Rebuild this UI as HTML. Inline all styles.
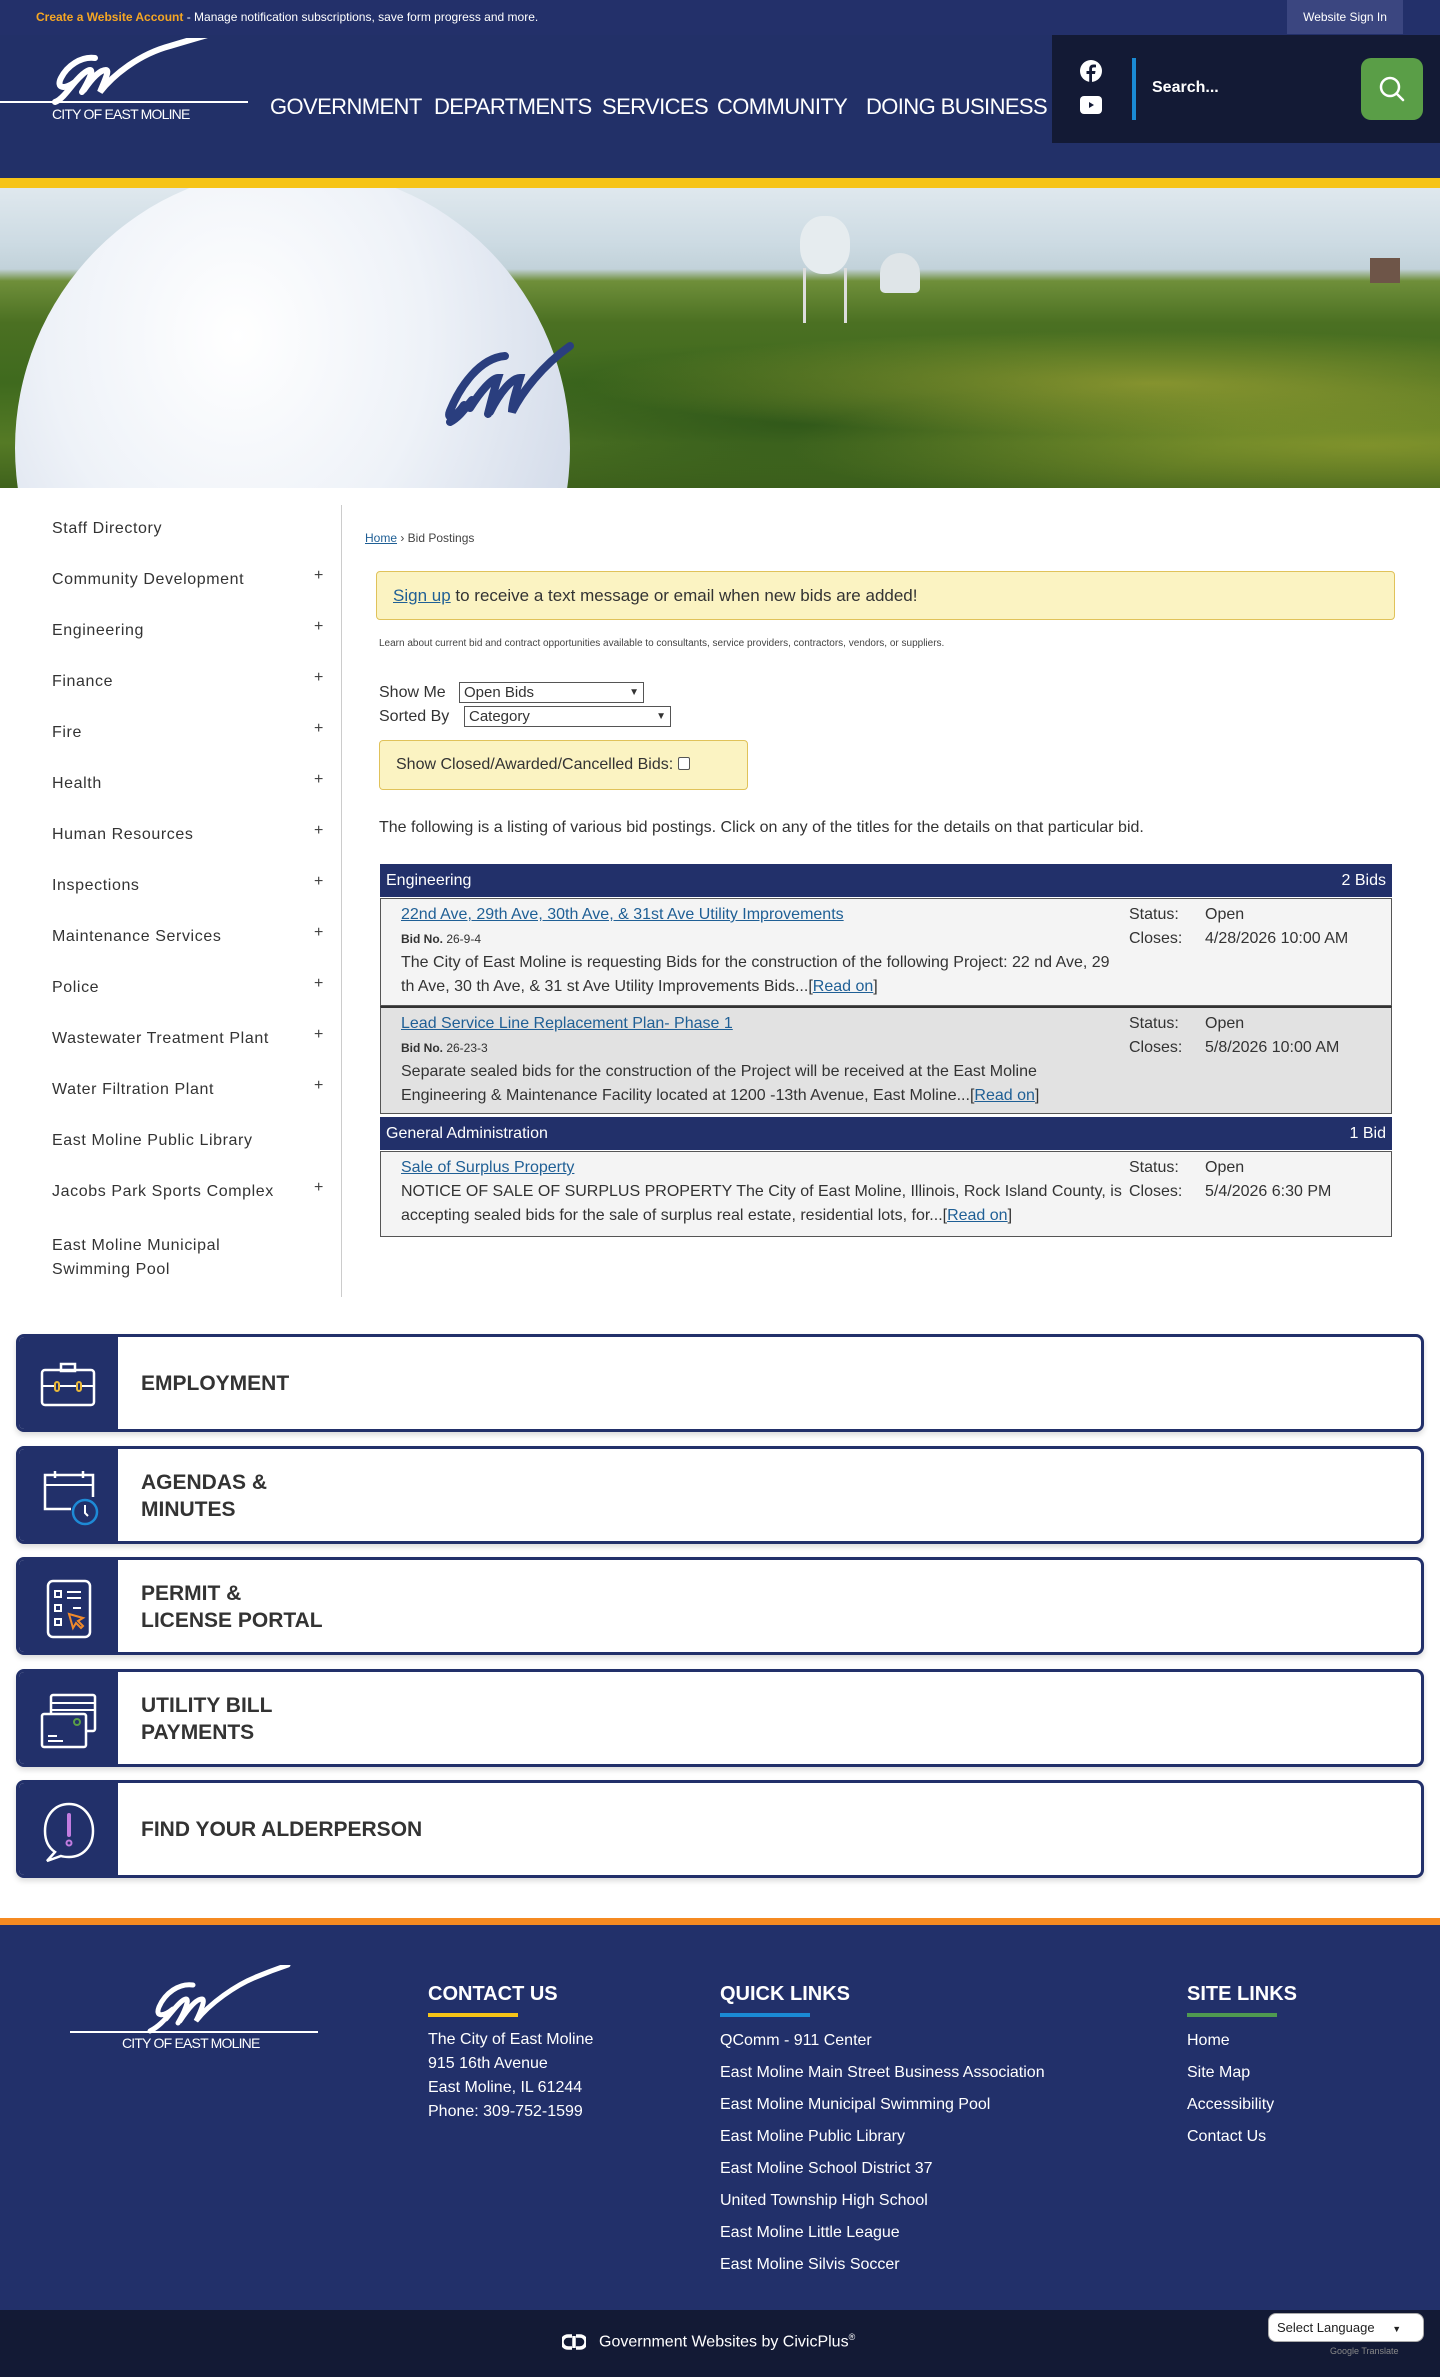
<!DOCTYPE html>
<html><head><meta charset="utf-8">
<style>
*{box-sizing:border-box;margin:0;padding:0}
body{width:1440px;height:2377px;font-family:"Liberation Sans",sans-serif;background:#fff;position:relative;overflow:hidden;color:#333}
.abs{position:absolute}
a{color:#1f5f95}
.top{left:0;top:0;width:1440px;height:35px;background:#23306a}
.hdr{left:0;top:35px;width:1440px;height:143px;background:#223068}
.nav{top:94px;color:#fff;font-size:22px;letter-spacing:-0.6px}
.side{left:52px;font-size:16px;color:#333;letter-spacing:0.6px}
.plus{left:314px;font-size:16px;color:#444}
.tblh{left:380px;width:1012px;height:33px;background:#22306a;color:#fff;font-size:16px;line-height:33px;padding:0 6px}
.row{left:380px;width:1012px;border:1px solid #555;font-size:16px;line-height:24px;color:#333}
.row .l{position:absolute;left:20px;top:4px;width:725px}
.row .r{position:absolute;left:748px;top:4px}
.row .r span{display:inline-block;width:76px}
.bn{font-size:12px}
.card{left:16px;width:1408px;height:98px;border:3px solid #22306a;border-radius:8px;background:#fff;overflow:hidden;box-shadow:0 3px 6px rgba(0,0,0,.15)}
.card .ic{position:absolute;left:0;top:0;width:99px;height:100%;background:#22306a}
.card .t{position:absolute;left:122px;font-size:21px;font-weight:bold;color:#333;line-height:27px}
.fh{top:1983px;color:#fff;font-size:20px;font-weight:bold}
.fl{color:#fff;font-size:16px}
</style></head><body>
<div class="abs top"></div>
<div class="abs" style="left:36px;top:10px;font-size:12px;color:#fff"><b style="color:#f5a623">Create a Website Account</b> - Manage notification subscriptions, save form progress and more.</div>
<div class="abs" style="left:1287px;top:0;width:116px;height:34px;background:#3b4680;color:#fff;font-size:12px;line-height:34px;text-align:center">Website Sign In</div>
<div class="abs hdr"></div>
<svg class="abs" style="left:0;top:38px" width="252" height="90" viewBox="0 0 252 90">
<path d="M95 20c-14-2-28 8-34 20-5 10 3 12 14 4M75 44c-8 10-14 18-20 20M70 50c8-10 16-18 20-18 4 0-2 12-8 22M84 52c8-12 16-20 22-20 4 0-2 12-6 22 14-18 40-38 70-46 20-6 40-12 70-20" fill="none" stroke="#fff" stroke-width="6" stroke-linecap="round"/>
<line x1="0" y1="64" x2="248" y2="64" stroke="#fff" stroke-width="2"/>
<text x="52" y="81" fill="#fff" font-size="14" font-family="Liberation Sans" letter-spacing="-0.8">CITY OF EAST MOLINE</text>
</svg>
<div class="abs nav" style="left:270px">GOVERNMENT</div>
<div class="abs nav" style="left:434px">DEPARTMENTS</div>
<div class="abs nav" style="left:602px">SERVICES</div>
<div class="abs nav" style="left:717px">COMMUNITY</div>
<div class="abs nav" style="left:866px">DOING BUSINESS</div>
<div class="abs" style="left:1052px;top:35px;width:388px;height:108px;background:#131a35"></div>
<svg class="abs" style="left:1080px;top:60px" width="22" height="22" viewBox="0 0 22 22"><circle cx="11" cy="11" r="11" fill="#fff"/><path d="M12 22v-8h3l.5-3H12V9c0-1 .4-1.6 1.7-1.6H16V4.7c-.5-.1-1.5-.2-2.5-.2-2.6 0-4.3 1.6-4.3 4.4V11H6.5v3h2.7v8z" fill="#131a35"/></svg>
<svg class="abs" style="left:1080px;top:96px" width="22" height="18" viewBox="0 0 22 18"><rect width="22" height="18" rx="4" fill="#fff"/><path d="M9 6l5 3-5 3z" fill="#131a35"/></svg>
<div class="abs" style="left:1132px;top:58px;width:4px;height:62px;background:#1a8ad4"></div>
<div class="abs" style="left:1152px;top:79px;color:#fff;font-size:16px;font-weight:bold">Search...</div>
<div class="abs" style="left:1361px;top:58px;width:62px;height:62px;background:#5a9e47;border-radius:10px"></div>
<svg class="abs" style="left:1377px;top:74px" width="30" height="30" viewBox="0 0 30 30"><circle cx="13" cy="13" r="9" fill="none" stroke="#fff" stroke-width="2.5"/><line x1="19.5" y1="19.5" x2="26" y2="26" stroke="#fff" stroke-width="2.5" stroke-linecap="round"/></svg>
<div class="abs" style="left:0;top:178px;width:1440px;height:10px;background:#f6c417"></div>
<div class="abs" style="left:0;top:188px;width:1440px;height:300px;overflow:hidden;background:linear-gradient(#dfe8ee 0%,#cddbe3 18%,#c2d2da 27%,#6f8f3a 31%,#4b7022 45%,#3f6a1e 65%,#557a25 85%,#3f621c 100%)">
 <div class="abs" style="left:0;top:90px;width:1440px;height:210px;background:radial-gradient(ellipse at 80% 50%,rgba(190,180,60,.55),transparent 35%),radial-gradient(ellipse at 95% 80%,rgba(170,170,50,.5),transparent 30%),radial-gradient(ellipse at 55% 70%,rgba(30,70,20,.6),transparent 40%)"></div>
 <div class="abs" style="left:15px;top:-20px;width:555px;height:560px;border-radius:50%/50%;background:radial-gradient(ellipse at 40% 30%,#fff 0%,#eef2f8 40%,#cdd6e6 85%,#a9b5cc 100%)"></div>
 <svg class="abs" style="left:380px;top:150px" width="200" height="110"><path d="M125 18c-25 2-45 30-55 55-4 10 6 6 14-6M92 62c-8 10-14 18-22 22M90 70c10-16 22-30 28-30-4 12-8 28-10 36M110 74c10-20 22-34 30-34-4 14-8 26-8 34 10-20 30-46 58-66" fill="none" stroke="#2a3e7e" stroke-width="8" stroke-linecap="round"/></svg>
 <div class="abs" style="left:800px;top:28px;width:50px;height:58px;border-radius:45%;background:#e6ecef"></div>
 <div class="abs" style="left:803px;top:80px;width:44px;height:55px;border-left:3px solid #ddd;border-right:3px solid #ddd"></div>
 <div class="abs" style="left:880px;top:65px;width:40px;height:40px;border-radius:50% 50% 5px 5px;background:#dfe5e8"></div>
 <div class="abs" style="left:1370px;top:70px;width:30px;height:25px;background:#6e5548"></div>
</div>
<div class="abs side" style="top:520px">Staff Directory</div>
<div class="abs side" style="top:571px">Community Development</div>
<div class="abs side" style="top:622px">Engineering</div>
<div class="abs side" style="top:673px">Finance</div>
<div class="abs side" style="top:724px">Fire</div>
<div class="abs side" style="top:775px">Health</div>
<div class="abs side" style="top:826px">Human Resources</div>
<div class="abs side" style="top:877px">Inspections</div>
<div class="abs side" style="top:928px">Maintenance Services</div>
<div class="abs side" style="top:979px">Police</div>
<div class="abs side" style="top:1030px">Wastewater Treatment Plant</div>
<div class="abs side" style="top:1081px">Water Filtration Plant</div>
<div class="abs side" style="top:1132px">East Moline Public Library</div>
<div class="abs side" style="top:1183px">Jacobs Park Sports Complex</div>
<div class="abs side" style="top:1234px;line-height:24px">East Moline Municipal<br>Swimming Pool</div>
<div class="abs plus" style="top:567px">+</div><div class="abs plus" style="top:618px">+</div><div class="abs plus" style="top:669px">+</div><div class="abs plus" style="top:720px">+</div><div class="abs plus" style="top:771px">+</div><div class="abs plus" style="top:822px">+</div><div class="abs plus" style="top:873px">+</div><div class="abs plus" style="top:924px">+</div><div class="abs plus" style="top:975px">+</div><div class="abs plus" style="top:1026px">+</div><div class="abs plus" style="top:1077px">+</div><div class="abs plus" style="top:1179px">+</div>
<div class="abs" style="left:341px;top:505px;width:1px;height:792px;background:#ccc"></div>
<div class="abs" style="left:365px;top:531px;font-size:12px;color:#444"><a href="#">Home</a> › Bid Postings</div>
<div class="abs" style="left:376px;top:571px;width:1019px;height:49px;background:#fbf3c2;border:1px solid #e0c25a;border-radius:4px;font-size:17px;line-height:47px;padding-left:16px"><a href="#">Sign up</a> to receive a text message or email when new bids are added!</div>
<div class="abs" style="left:379px;top:638px;font-size:10px;color:#444">Learn about current bid and contract opportunities available to consultants, service providers, contractors, vendors, or suppliers.</div>
<div class="abs" style="left:379px;top:684px;font-size:16px">Show Me</div>
<div class="abs" style="left:459px;top:682px;width:185px;height:21px;border:1px solid #555;font-size:15px;padding-left:4px;line-height:19px">Open Bids<span style="position:absolute;right:4px;font-size:10px">▼</span></div>
<div class="abs" style="left:379px;top:708px;font-size:16px">Sorted By</div>
<div class="abs" style="left:464px;top:706px;width:207px;height:21px;border:1px solid #555;font-size:15px;padding-left:4px;line-height:19px">Category<span style="position:absolute;right:4px;font-size:10px">▼</span></div>
<div class="abs" style="left:379px;top:740px;width:369px;height:50px;background:#fbf3c2;border:1px solid #e0c25a;border-radius:4px;font-size:16px;line-height:48px;padding-left:16px">Show Closed/Awarded/Cancelled Bids: <span style="display:inline-block;width:12px;height:13px;border:1px solid #555;border-radius:2px;vertical-align:-1px;background:#fff"></span></div>
<div class="abs" style="left:379px;top:819px;font-size:16px">The following is a listing of various bid postings. Click on any of the titles for the details on that particular bid.</div>
<div class="abs tblh" style="top:864px">Engineering<span style="float:right">2 Bids</span></div>
<div class="abs row" style="top:898px;height:108px;background:#f4f4f4"><div class="l"><a href="#">22nd Ave, 29th Ave, 30th Ave, &amp; 31st Ave Utility Improvements</a><br><span class="bn"><b>Bid No.</b> 26-9-4</span><br>The City of East Moline is requesting Bids for the construction of the following Project: 22 nd Ave, 29 th Ave, 30 th Ave, &amp; 31 st Ave Utility Improvements Bids...[<a href="#">Read on</a>]</div><div class="r"><span>Status:</span>Open<br><span>Closes:</span>4/28/2026 10:00 AM</div></div>
<div class="abs row" style="top:1006px;height:108px;background:#e2e2e2;border-top:2px solid #333"><div class="l"><a href="#">Lead Service Line Replacement Plan- Phase 1</a><br><span class="bn"><b>Bid No.</b> 26-23-3</span><br>Separate sealed bids for the construction of the Project will be received at the East Moline Engineering &amp; Maintenance Facility located at 1200 -13th Avenue, East Moline...[<a href="#">Read on</a>]</div><div class="r"><span>Status:</span>Open<br><span>Closes:</span>5/8/2026 10:00 AM</div></div>
<div class="abs tblh" style="top:1117px">General Administration<span style="float:right">1 Bid</span></div>
<div class="abs row" style="top:1151px;height:86px;background:#f4f4f4"><div class="l"><a href="#">Sale of Surplus Property</a><br>NOTICE OF SALE OF SURPLUS PROPERTY The City of East Moline, Illinois, Rock Island County, is accepting sealed bids for the sale of surplus real estate, residential lots, for...[<a href="#">Read on</a>]</div><div class="r"><span>Status:</span>Open<br><span>Closes:</span>5/4/2026 6:30 PM</div></div>
<div class="abs card" style="top:1334px"><div class="ic"><svg style="position:absolute;left:20px;top:25px" width="58" height="46" viewBox="0 0 58 46"><rect x="3" y="8" width="52" height="35" rx="3" fill="none" stroke="#fff" stroke-width="2.5"/><rect x="22" y="2" width="14" height="7" fill="none" stroke="#fff" stroke-width="2.5"/><line x1="3" y1="24" x2="55" y2="24" stroke="#fff" stroke-width="2"/><rect x="16" y="20" width="4" height="9" rx="2" fill="#22306a" stroke="#e9b83a" stroke-width="2"/><rect x="38" y="20" width="4" height="9" rx="2" fill="#22306a" stroke="#e9b83a" stroke-width="2"/></svg></div><div class="t" style="top:33px">EMPLOYMENT</div></div>
<div class="abs card" style="top:1446px"><div class="ic"><svg style="position:absolute;left:22px;top:20px" width="58" height="58" viewBox="0 0 58 58"><path d="M30 40H4V6h48v22" fill="none" stroke="#fff" stroke-width="2.5"/><line x1="4" y1="16" x2="52" y2="16" stroke="#fff" stroke-width="2"/><line x1="14" y1="2" x2="14" y2="9" stroke="#fff" stroke-width="2.5"/><line x1="42" y1="2" x2="42" y2="9" stroke="#fff" stroke-width="2.5"/><circle cx="44" cy="43" r="12" fill="#22306a" stroke="#1e8ad6" stroke-width="2.5"/><path d="M44 36v8l3 3" stroke="#fff" stroke-width="2" fill="none"/></svg></div><div class="t" style="top:20px">AGENDAS &amp;<br>MINUTES</div></div>
<div class="abs card" style="top:1557px"><div class="ic"><svg style="position:absolute;left:26px;top:18px" width="50" height="62" viewBox="0 0 50 62"><rect x="3" y="3" width="42" height="56" rx="5" fill="none" stroke="#fff" stroke-width="2.5"/><rect x="10" y="13" width="6" height="6" fill="none" stroke="#fff" stroke-width="2"/><rect x="10" y="27" width="6" height="6" fill="none" stroke="#fff" stroke-width="2"/><rect x="10" y="41" width="6" height="6" fill="none" stroke="#fff" stroke-width="2"/><line x1="22" y1="14" x2="36" y2="14" stroke="#fff" stroke-width="2"/><line x1="22" y1="20" x2="36" y2="20" stroke="#fff" stroke-width="2"/><line x1="28" y1="30" x2="36" y2="30" stroke="#fff" stroke-width="2"/><path d="M24 36l4 14 3-5 5 5 2-2-5-5 5-3z" fill="none" stroke="#f08a2b" stroke-width="2"/></svg></div><div class="t" style="top:20px">PERMIT &amp;<br>LICENSE PORTAL</div></div>
<div class="abs card" style="top:1669px"><div class="ic"><svg style="position:absolute;left:20px;top:20px" width="60" height="58" viewBox="0 0 60 58"><rect x="12" y="3" width="44" height="36" rx="2" fill="none" stroke="#fff" stroke-width="2.5"/><line x1="12" y1="11" x2="56" y2="11" stroke="#fff" stroke-width="2"/><line x1="12" y1="18" x2="56" y2="18" stroke="#fff" stroke-width="2"/><rect x="3" y="22" width="44" height="33" rx="2" fill="#22306a" stroke="#fff" stroke-width="2.5"/><circle cx="38" cy="30" r="3" fill="none" stroke="#5a9e47" stroke-width="2"/><line x1="9" y1="44" x2="18" y2="44" stroke="#fff" stroke-width="2"/><line x1="9" y1="49" x2="24" y2="49" stroke="#fff" stroke-width="2"/></svg></div><div class="t" style="top:20px">UTILITY BILL<br>PAYMENTS</div></div>
<div class="abs card" style="top:1780px"><div class="ic"><svg style="position:absolute;left:22px;top:18px" width="56" height="62" viewBox="0 0 56 62"><path d="M28 3C14 3 4 14 4 30c0 10 4 17 10 21l-8 9 14-5c3 1 5 1 8 1 14 0 24-11 24-26S42 3 28 3z" fill="none" stroke="#fff" stroke-width="2.5"/><path d="M28 14v20" stroke="#c27ce0" stroke-width="4" stroke-linecap="round"/><circle cx="28" cy="42" r="2.5" fill="none" stroke="#c27ce0" stroke-width="2"/></svg></div><div class="t" style="top:33px">FIND YOUR ALDERPERSON</div></div>
<div class="abs" style="left:0;top:1918px;width:1440px;height:7px;background:#f58a21"></div>
<div class="abs" style="left:0;top:1925px;width:1440px;height:385px;background:#22306a"></div>
<svg class="abs" style="left:68px;top:1965px" width="252" height="90" viewBox="0 0 252 90">
<path d="M125 20c-14-2-28 8-34 22-4 10 4 10 14 2M104 46c-8 10-14 16-22 20M98 54c8-10 16-20 20-20 4 0-2 14-8 24M112 56c8-12 16-22 22-22 4 0-2 14-6 22 14-18 40-36 60-44 12-5 20-8 32-12" fill="none" stroke="#fff" stroke-width="5" stroke-linecap="round"/>
<line x1="2" y1="67" x2="250" y2="67" stroke="#fff" stroke-width="2"/>
<text x="54" y="83" fill="#fff" font-size="14" font-family="Liberation Sans" letter-spacing="-0.8">CITY OF EAST MOLINE</text>
</svg>
<div class="abs fh" style="left:428px">CONTACT US</div>
<div class="abs" style="left:428px;top:2013px;width:90px;height:4px;background:#f6c417"></div>
<div class="abs fl" style="left:428px;top:2028px;line-height:24px">The City of East Moline<br>915 16th Avenue<br>East Moline, IL 61244<br>Phone: 309-752-1599</div>
<div class="abs fh" style="left:720px">QUICK LINKS</div>
<div class="abs" style="left:720px;top:2013px;width:90px;height:4px;background:#1a8ad4"></div>
<div class="abs fl" style="left:720px;top:2025px;line-height:32px">QComm - 911 Center<br>East Moline Main Street Business Association<br>East Moline Municipal Swimming Pool<br>East Moline Public Library<br>East Moline School District 37<br>United Township High School<br>East Moline Little League<br>East Moline Silvis Soccer</div>
<div class="abs fh" style="left:1187px">SITE LINKS</div>
<div class="abs" style="left:1187px;top:2013px;width:90px;height:4px;background:#4f9a50"></div>
<div class="abs fl" style="left:1187px;top:2025px;line-height:32px">Home<br>Site Map<br>Accessibility<br>Contact Us</div>
<div class="abs" style="left:0;top:2310px;width:1440px;height:67px;background:#131a35"></div>
<svg class="abs" style="left:562px;top:2333px" width="24" height="18" viewBox="0 0 24 18"><path d="M10 3H6a6 6 0 0 0 0 12h4M14 3h4a6 6 0 0 1 0 12h-4M12 3v12" fill="none" stroke="#fff" stroke-width="3.5"/></svg>
<div class="abs" style="left:599px;top:2332px;color:#fff;font-size:16px">Government Websites by CivicPlus<sup style="font-size:9px">®</sup></div>
<div class="abs" style="left:1268px;top:2313px;width:156px;height:29px;background:#fff;border:1px solid #aaa;border-radius:8px;font-size:13px;line-height:27px;padding-left:8px;color:#222">Select Language <span style="font-size:9px;margin-left:14px">▼</span></div>
<div class="abs" style="left:1330px;top:2346px;font-size:9px;color:#888">Google Translate</div>
</body></html>
